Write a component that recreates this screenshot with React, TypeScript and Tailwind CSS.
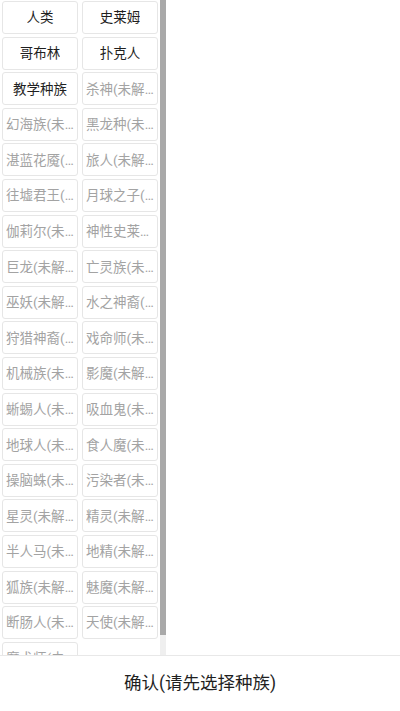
const races: { name: string; locked: boolean }[] = [
  { name: '人类', locked: false },
  { name: '史莱姆', locked: false },
  { name: '哥布林', locked: false },
  { name: '扑克人', locked: false },
  { name: '教学种族', locked: false },
  { name: '杀神', locked: true },
  { name: '幻海族', locked: true },
  { name: '黑龙种', locked: true },
  { name: '湛蓝花魇', locked: true },
  { name: '旅人', locked: true },
  { name: '往墟君王', locked: true },
  { name: '月球之子', locked: true },
  { name: '伽莉尔', locked: true },
  { name: '神性史莱姆', locked: true },
  { name: '巨龙', locked: true },
  { name: '亡灵族', locked: true },
  { name: '巫妖', locked: true },
  { name: '水之神裔', locked: true },
  { name: '狩猎神裔', locked: true },
  { name: '戏命师', locked: true },
  { name: '机械族', locked: true },
  { name: '影魔', locked: true },
  { name: '蜥蜴人', locked: true },
  { name: '吸血鬼', locked: true },
  { name: '地球人', locked: true },
  { name: '食人魔', locked: true },
  { name: '操脑蛛', locked: true },
  { name: '污染者', locked: true },
  { name: '星灵', locked: true },
  { name: '精灵', locked: true },
  { name: '半人马', locked: true },
  { name: '地精', locked: true },
  { name: '狐族', locked: true },
  { name: '魅魔', locked: true },
  { name: '断肠人', locked: true },
  { name: '天使', locked: true },
  { name: '魔术师', locked: true },
];

export default function App() {
  return (
    <div
      className="flex flex-col h-[711px] w-[400px] bg-white overflow-hidden"
      style={{ fontFamily: 'Roboto, "Noto Sans CJK SC", sans-serif' }}
    >
      <div className="flex flex-1 min-h-0">
        {/* race list */}
        <div className="w-[160px] h-full overflow-hidden px-[2px] pt-[1px]">
          <div className="grid grid-cols-2 gap-x-[4px] gap-y-[2.6px]">
            {races.map((r) => (
              <div
                key={r.name}
                className={`h-[33px] min-w-0 flex items-center justify-center border border-[#e6e6e6] rounded-[3px] px-[3px] text-[13.5px] ${
                  r.locked ? 'text-[#a3a3a3]' : 'text-[#1f1f1f]'
                }`}
              >
                <span className="block min-w-0 overflow-hidden whitespace-nowrap text-ellipsis">
                  {r.locked ? `${r.name}(未解锁)` : r.name}
                </span>
              </div>
            ))}
          </div>
        </div>
        {/* scrollbar */}
        <div className="w-[6px] h-full bg-[#efefef] flex flex-col">
          <div className="h-[635px] bg-[#a9a9a9]" />
        </div>
      </div>

      {/* confirm */}
      <div className="h-[56px] shrink-0 border-t border-[#e8e8e8] flex items-center justify-center text-[17.5px] text-[#1f1f1f]">
        确认(请先选择种族)
      </div>
    </div>
  );
}
